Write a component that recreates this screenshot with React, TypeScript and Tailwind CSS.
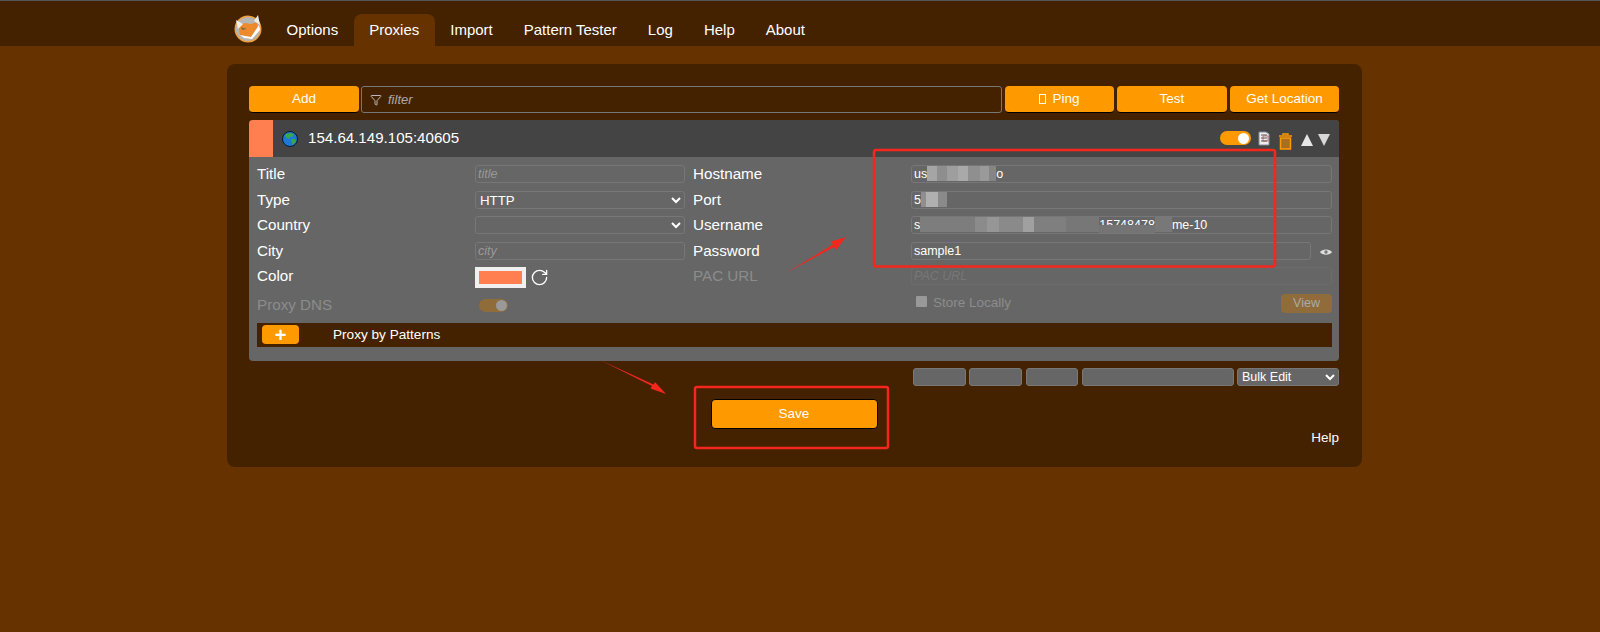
import { Filter, RotateCw } from 'lucide-react';

const font = { fontFamily: '"Liberation Sans", Arial, sans-serif' };

const fieldClass =
  'h-[18px] w-full rounded-[3px] border border-[#777] bg-transparent px-[2px] text-[12.5px] leading-[16px] text-white outline-none';
const selectClass =
  'h-[18px] w-full rounded-[3px] border border-[#777] bg-transparent text-[13.3px] leading-[16px] text-white outline-none';
const labelClass = 'text-[15.2px] leading-[18px] text-white';
const dimLabelClass = 'text-[15.2px] leading-[18px] text-[#8c8c8c]';
const orangeBtn =
  'h-[27px] rounded-[4px] border-b border-black bg-[#ff9900] text-[13.5px] text-white flex items-center justify-center';

// pixelated blur used to hide parts of the credentials
function Mosaic({ blocks }: { blocks: [number, string][] }) {
  return (
    <span className="inline-flex h-[15px] align-top blur-[0.6px]">
      {blocks.map(([w, c], i) => (
        <span key={i} className="block h-full" style={{ width: w, background: c }} />
      ))}
    </span>
  );
}

function Logo() {
  return (
    <svg width="32" height="32" viewBox="0 0 32 32" className="shrink-0">
      <circle cx="16" cy="17" r="13.5" fill="#f0a040" />
      <circle cx="16" cy="17" r="12" fill="#b5b5b5" />
      <path d="M6 13l7-2 6 1 6-2 1 5-4 9-6 3-8-4z" fill="#ee8a2e" />
      <path d="M4 8l7 4-5 5zM26 3l2 10-6-4z" fill="#eee" />
      <path d="M8 23l11 2 8-12 1 5-8 9-8-1z" fill="#fff" />
      <path d="M9 15l6 2-5 1z" fill="#8a6a45" />
    </svg>
  );
}

function Globe() {
  return (
    <svg width="16" height="16" viewBox="0 0 16 16" className="shrink-0">
      <circle cx="8" cy="8" r="7.5" fill="#1d78d6" stroke="#0a1a2a" />
      <path d="M4 3l5-1 3 2-2 2-2 0-1 2-2-1-2-2zM9 8l4 0 1 2-3 4-1-2z" fill="#39a84a" />
    </svg>
  );
}

function HeaderIcons() {
  return (
    <div className="flex items-start pt-[11px]">
      <div className="flex h-[14px] w-[31px] items-center justify-end rounded-full bg-[#ff9900] pr-[2px]">
        <span className="block h-[11px] w-[11px] rounded-full bg-white" />
      </div>
      <svg width="12" height="15" viewBox="0 0 12 15" className="ml-[7px] shrink-0">
        <path d="M1 1h7l3 2v11H1z" fill="#eee" stroke="#889" />
        <path d="M3 4h6M3 7h6M3 10h6" stroke="#555" />
        <path d="M5 5h5v5H5z" fill="none" stroke="#a33" strokeWidth="0.6" />
      </svg>
      <svg width="13" height="17" viewBox="0 0 13 17" className="ml-[9px] mt-[2px] shrink-0">
        <path d="M4 2V1h5v1M0 3h13" stroke="#ff9900" strokeWidth="1.5" fill="none" />
        <path d="M1.5 5h10v11h-10z" fill="#a8701e" stroke="#ff9900" strokeWidth="1.5" />
      </svg>
      <svg width="12" height="12" viewBox="0 0 12 12" className="ml-[9px] mt-[3px] shrink-0">
        <path d="M6 0l6 12H0z" fill="#e6e6e6" />
      </svg>
      <svg width="12" height="12" viewBox="0 0 12 12" className="ml-[5px] mt-[3px] shrink-0">
        <path d="M0 0h12L6 12z" fill="#d8d8d8" />
      </svg>
    </div>
  );
}

function ProxyForm() {
  return (
    <div className="grid grid-cols-[218px_210px_226px_421px] grid-rows-[18px_18px_18px_18px_19px_19px] gap-y-[7.6px] pt-[8px]">
      <div className={labelClass}>Title</div>
      <input placeholder="title" className={`${fieldClass} italic placeholder:text-[#999]`} />
      <div className={`${labelClass} pl-[8px]`}>Hostname</div>
      <div className={`${fieldClass} whitespace-nowrap`}>
        us
        <Mosaic blocks={[[10, '#a5a5a5'], [10, '#8e8e8e'], [11, '#9e9e9e'], [10, '#a9a9a9'], [12, '#8f8f8f'], [9, '#9a9a9a'], [7, '#858585']]} />
        o
      </div>

      <div className={labelClass}>Type</div>
      <select defaultValue="HTTP" className={selectClass}>
        <option className="text-black">HTTP</option>
      </select>
      <div className={`${labelClass} pl-[8px]`}>Port</div>
      <div className={`${fieldClass} whitespace-nowrap`}>
        5
        <Mosaic blocks={[[5, '#8f8f8f'], [12, '#b0b0b0'], [9, '#8a8a8a']]} />
      </div>

      <div className={labelClass}>Country</div>
      <select className={selectClass}>
        <option />
      </select>
      <div className={`${labelClass} pl-[8px]`}>Username</div>
      <div className={`${fieldClass} whitespace-nowrap`}>
        s
        <Mosaic blocks={[[55, '#7d7d7d'], [12, '#8b8b8b'], [12, '#969696'], [24, '#8a8a8a'], [11, '#a0a0a0'], [32, '#7f7f7f'], [33, '#777']]} />
        <span className="relative inline-block">
          15748478
          <span className="absolute bottom-0 left-0 h-[8px] w-full bg-[#747474] blur-[0.6px]" />
        </span>
        <Mosaic blocks={[[17, '#787878']]} />
        me-10
      </div>

      <div className={labelClass}>City</div>
      <input placeholder="city" className={`${fieldClass} italic placeholder:text-[#999]`} />
      <div className={`${labelClass} pl-[8px]`}>Password</div>
      <div className="flex items-center">
        <input defaultValue="sample1" className={`${fieldClass} w-[398px]`} />
        <svg width="12" height="8" viewBox="0 0 12 8" className="ml-[9px] mt-[2px] shrink-0">
          <path d="M0 4C2 .5 10 .5 12 4 10 7.5 2 7.5 0 4z" fill="#ddd" />
          <circle cx="6" cy="4" r="1.7" fill="#777" />
        </svg>
      </div>

      <div className={labelClass}>Color</div>
      <div className="flex items-start">
        <div className="h-[21px] w-[51px] border-[4px] border-[#f0f0f0] bg-[#ff7f50]" />
        <RotateCw size={19} strokeWidth={1.7} className="ml-[4px] mt-[1px] text-white" />
      </div>
      <div className={`${dimLabelClass} pl-[8px]`}>PAC URL</div>
      <input
        placeholder="PAC URL"
        className="h-[18px] w-full rounded-[3px] border border-[#6c6c6c] bg-transparent px-[2px] text-[12.5px] italic outline-none placeholder:text-[#777]"
      />

      <div className={`${dimLabelClass} pt-[2px]`}>Proxy DNS</div>
      <div className="pl-[4px] pt-[5px]">
        <div className="flex h-[13px] w-[29px] items-center justify-end rounded-full bg-[#8f6c3a] pr-[1px]">
          <span className="block h-[11px] w-[11px] rounded-full bg-[#999]" />
        </div>
      </div>
      <div />
      <div className="flex items-center justify-between pl-[5px]">
        <div className="flex items-center">
          <span className="-mt-[3px] block h-[11px] w-[11px] rounded-[1px] bg-[#999]" />
          <span className="ml-[6px] text-[13.5px] text-[#8c8c8c]">Store Locally</span>
        </div>
        <div className="flex h-[19px] w-[51px] items-center justify-center rounded-[4px] bg-[#8f6c3a] text-[12.5px] text-[#aaa]">
          View
        </div>
      </div>
    </div>
  );
}

function Annotations() {
  return (
    <svg width="1600" height="632" viewBox="0 0 1600 632" className="pointer-events-none absolute left-0 top-0">
      <g fill="none" stroke="#f5261b" strokeWidth="2.5">
        <rect x="874" y="150" width="401" height="116.5" rx="2" />
        <rect x="695" y="387" width="193" height="61" rx="2" />
      </g>
      <path d="M786 273L833 244.5 831 241.5 846 237 836 250 834 247z" fill="#f5261b" />
      <path d="M600 360L652 386 650.5 388.5 666 394 655 382 653.5 384.5z" fill="#f5261b" />
    </svg>
  );
}

export default function App() {
  const tabs = ['Options', 'Proxies', 'Import', 'Pattern Tester', 'Log', 'Help', 'About'];

  return (
    <div className="relative h-[632px] w-[1600px] overflow-hidden bg-[#663300]" style={font}>
      {/* Top nav */}
      <div className="flex h-[46px] items-end border-t border-[#555] bg-[#442200] pl-[232px]">
        <div className="mb-[2px] mr-[7px]">
          <Logo />
        </div>
        {tabs.map((tab) => (
          <div
            key={tab}
            className={`flex h-[32px] items-center rounded-t-[8px] px-[15.5px] pt-[1px] text-[15px] text-white ${
              tab === 'Proxies' ? 'bg-[#663300]' : ''
            }`}
          >
            {tab}
          </div>
        ))}
      </div>

      {/* Main panel */}
      <div className="ml-[227px] mt-[18px] h-[403px] w-[1135px] rounded-[8px] bg-[#442200] pl-[22px] pr-[23px] pt-[22px]">
        <div className="flex gap-[3px]">
          <button className={`${orangeBtn} w-[110px]`}>Add</button>
          <div className="-ml-[1px] flex h-[27px] flex-1 items-center rounded-[3px] border border-[#777] pl-[8px] text-[13px] italic text-[#aaa]">
            <Filter size={12} className="mr-[6px] text-[#bbb]" />
            filter
          </div>
          <button className={`${orangeBtn} w-[109px]`}>
            <span className="mr-[6px] inline-block h-[10px] w-[7px] border border-white" />
            Ping
          </button>
          <button className={`${orangeBtn} w-[110px]`}>Test</button>
          <button className={`${orangeBtn} w-[109px]`}>Get Location</button>
        </div>

        <div className="mt-[7px] rounded-[4px] bg-[#666]">
          <div className="flex h-[37px] justify-between rounded-t-[4px] bg-[#444] pr-[9px]">
            <div className="flex items-center">
              <span className="block h-[37px] w-[24px] rounded-tl-[4px] bg-[#ff7f50]" />
              <span className="ml-[9px]">
                <Globe />
              </span>
              <span className="ml-[10px] text-[15.1px] text-white">154.64.149.105:40605</span>
            </div>
            <HeaderIcons />
          </div>
          <div className="pb-[14px] pl-[8px] pr-[7px]">
            <ProxyForm />
            <div className="mt-[10px] flex h-[24px] items-center bg-[#442200] pl-[5px]">
              <span className="flex h-[19px] w-[37px] items-center justify-center rounded-[4px] bg-[#ff9900] text-[20px] font-bold leading-none text-white">
                +
              </span>
              <span className="ml-[34px] text-[13.6px] text-white">Proxy by Patterns</span>
            </div>
          </div>
        </div>

        <div className="mt-[7px] flex justify-end">
          <span className="h-[18px] w-[53px] rounded-[3px] border border-[#777] bg-[#666]" />
          <span className="ml-[3px] h-[18px] w-[53px] rounded-[3px] border border-[#777] bg-[#666]" />
          <span className="ml-[4px] h-[18px] w-[52px] rounded-[3px] border border-[#777] bg-[#666]" />
          <span className="ml-[4px] h-[18px] w-[152px] rounded-[3px] border border-[#777] bg-[#666]" />
          <select className="ml-[3px] h-[18px] w-[102px] rounded-[3px] border border-[#777] bg-[#666] text-[12.5px] text-white outline-none">
            <option>Bulk Edit</option>
          </select>
        </div>

        <div className="mt-[13px] grid h-[46px] grid-cols-[1fr_167px_1fr]">
          <div />
          <button className="flex h-[30px] w-[167px] items-center justify-center rounded-[4px] border border-black bg-[#ff9900] text-[13.5px] text-white">
            Save
          </button>
          <div className="self-end justify-self-end text-[13.5px] leading-[15px] text-white">Help</div>
        </div>
      </div>

      <Annotations />
    </div>
  );
}
